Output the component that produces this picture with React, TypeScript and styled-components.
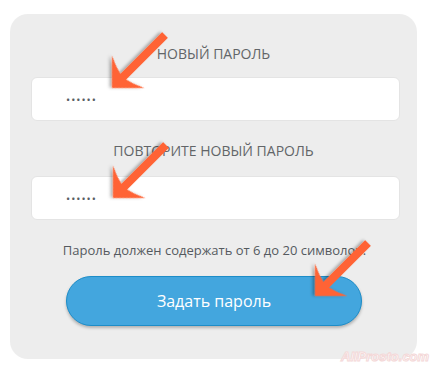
import styled, { createGlobalStyle } from "styled-components";

const Global = createGlobalStyle`
  body {
    margin: 0;
    background: #ffffff;
    font-family: "Open Sans", "Liberation Sans", sans-serif;
  }
`;

const Page = styled.div`
  position: relative;
  width: 430px;
  height: 374px;
  padding: 14px 0 0 10px;
  box-sizing: border-box;
  overflow: hidden;
`;

const Card = styled.div`
  width: 407px;
  height: 345px;
  box-sizing: border-box;
  background-color: #ededed;
  border-radius: 18px;
  padding: 30px 17px 0 21px;
  display: flex;
  flex-direction: column;
`;

const Label = styled.div<{ $gap: number }>`
  font-size: 14px;
  line-height: 20px;
  color: #626568;
  text-align: center;
  text-transform: uppercase;
  margin-bottom: ${(p) => p.$gap}px;
  padding-right: 4px;
`;

const Input = styled.input<{ $after?: number }>`
  height: 44px;
  box-sizing: border-box;
  width: 100%;
  border: 1px solid #e4e4e4;
  border-radius: 6px;
  background: #ffffff;
  padding: 0 0 0 34px;
  font-family: "Open Sans", sans-serif;
  font-size: 11px;
  letter-spacing: 1px;
  color: #5a5e64;
  outline: none;
  margin-bottom: ${(p) => p.$after ?? 0}px;
`;

const Hint = styled.div`
  font-size: 13px;
  line-height: 18px;
  color: #555a5f;
  text-align: center;
  padding-right: 2px;
  margin-bottom: 17px;
`;

const Button = styled.button`
  align-self: center;
  margin-right: 3px;
  width: 296px;
  height: 50px;
  border-radius: 25px;
  border: 1px solid #1d8dc8;
  background: #43a6de;
  box-shadow: 0 2px 3px rgba(0, 0, 0, 0.25);
  color: #ffffff;
  font-family: "Open Sans", sans-serif;
  font-size: 16px;
  cursor: pointer;
`;

const Overlay = styled.svg`
  position: absolute;
  left: 0;
  top: 0;
  pointer-events: none;
`;

const Watermark = styled.div`
  position: absolute;
  left: 341px;
  top: 349px;
  font-family: "Liberation Sans", sans-serif;
  font-style: italic;
  font-weight: 700;
  font-size: 13px;
  color: #ffffff;
  -webkit-text-stroke: 1px #f4d8d8;
  white-space: nowrap;
`;

const L = 75;
const arrowPath = `M 0 -4 L ${L - 16} -4 Q ${L - 18} -13 ${L - 23} -23 L ${L} 0 L ${L - 23} 23 Q ${L - 18} 13 ${L - 16} 4 L 0 4 Z`;

const arrows = [
  { x: 165, y: 35 },
  { x: 166, y: 145 },
  { x: 368, y: 243 },
];

const Arrows = () => (
  <Overlay width="430" height="374" viewBox="0 0 430 374">
    <defs>
      <filter id="sh" x="-20%" y="-20%" width="140%" height="140%">
        <feDropShadow dx="1.5" dy="2" stdDeviation="1.5" floodColor="#000" floodOpacity="0.3" />
      </filter>
    </defs>
    {arrows.map((a, i) => (
      <path
        key={i}
        d={arrowPath}
        fill="#ff6436"
        filter="url(#sh)"
        transform={`translate(${a.x} ${a.y}) rotate(135)`}
      />
    ))}
  </Overlay>
);

const App = () => {
  return (
    <Page>
      <Global />
      <Card>
        <Label $gap={13}>Новый пароль</Label>
        <Input readOnly value="••••••" $after={20} />
        <Label $gap={15}>Повторите новый пароль</Label>
        <Input readOnly value="••••••" $after={21} />
        <Hint>Пароль должен содержать от 6 до 20 символов.</Hint>
        <Button>Задать пароль</Button>
      </Card>
      <Arrows />
      <Watermark>AllProsto.com</Watermark>
    </Page>
  );
};

export default App;
